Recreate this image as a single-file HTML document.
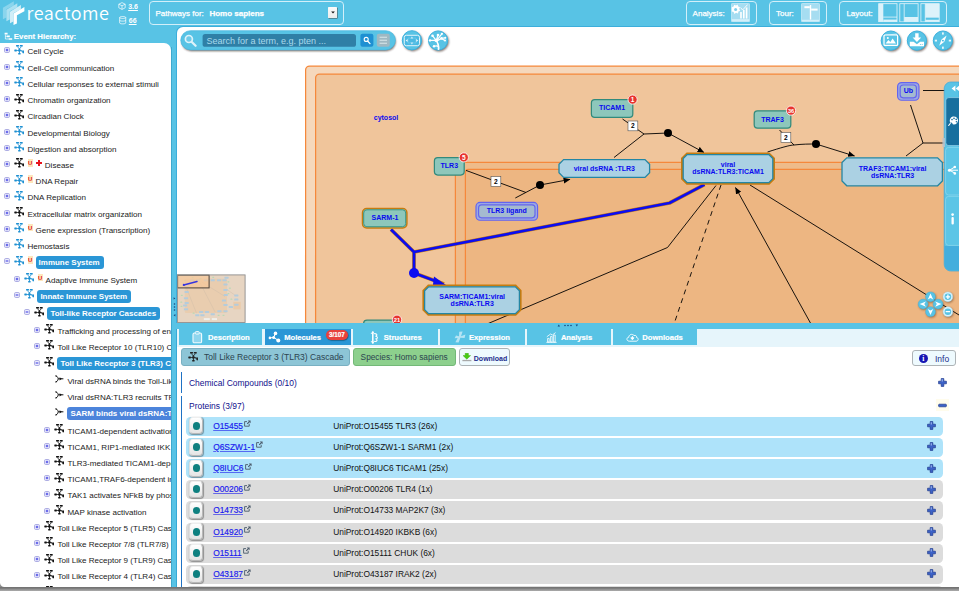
<!DOCTYPE html>
<html lang="en">
<head>
<meta charset="utf-8">
<title>Reactome Pathway Browser</title>
<style>
*{box-sizing:border-box;margin:0;padding:0}
html,body{width:959px;height:591px;overflow:hidden}
body{background:#58C3E5;font-family:"Liberation Sans",Arial,sans-serif;font-size:8px;color:#222;position:relative}
.abs{position:absolute}
svg{display:block}
/* header */
#logo{position:absolute;left:26.6px;top:0.4px;font-family:"Noto Sans CJK SC","Liberation Sans",sans-serif;font-weight:350;font-size:18px;line-height:24px;color:#fff;letter-spacing:.5px}
.ver{position:absolute;left:128.2px;color:#fff;font-weight:bold;font-size:7px;line-height:8px;text-decoration:underline}
.hbox{position:absolute;top:1px;height:24.3px;border:1.3px solid #D3EFF9;border-radius:4px;color:#fff;font-size:8px;line-height:23.8px;-webkit-text-stroke:.25px #fff}
.hbox b{font-weight:bold}
/* tree */
#ehlabel{position:absolute;left:13.8px;top:30.8px;color:#fff;font-weight:bold;font-size:7.85px;line-height:12px;-webkit-text-stroke:.15px #fff}
#tree{position:absolute;left:0;top:42.6px;width:171px;height:544.8px;background:#fff;border-top-right-radius:7px;border-bottom-left-radius:4.5px;overflow:hidden}
#treein{position:absolute;left:0;top:-42.6px;width:400px;height:640px}
.tr{position:absolute;left:0;width:400px;height:16px;line-height:16px;white-space:nowrap}
.tr .tx{position:absolute;top:.7px;color:#222;font-size:8.05px}
.tr .sel{position:absolute;top:1.3px;height:13.2px;line-height:14.4px;padding:0 4px 0 2.9px;margin-left:.1px;background:#2A96D6;color:#fff;font-weight:bold;font-size:7.97px;border-radius:3px}
.tr .sel.s2{background:#4C84DB}
.ex{position:absolute;top:3.5px}
.pi{position:absolute;top:1px}
.u{position:absolute;top:1.6px;width:5px;height:7.6px;line-height:8.6px;margin-left:.2px;background:#FDE6BC;color:#DC0808;font-weight:bold;font-size:5.8px;text-align:center}
.dz{position:absolute;top:2.6px;width:6px;height:6px}
.dz:before{content:"";position:absolute;left:2px;top:0;width:2px;height:6px;background:#E8141C}
.dz:after{content:"";position:absolute;left:0;top:2px;width:6px;height:2px;background:#E8141C}
/* diagram */
#diagb{position:absolute;left:176.2px;top:26.4px;width:790px;height:297px;background:#3CAEDB;border-top-left-radius:6.6px}
#diag{position:absolute;left:177px;top:27.3px;width:782px;height:295.3px;background:#fff;border-top-left-radius:6px;overflow:hidden}
#diag>svg{position:absolute;left:-177px;top:-27.3px}
/* bottom */
#tabs{position:absolute;left:177px;top:328.9px;width:782px;height:18.3px;background:#E6F5FB}
.tab{position:absolute;top:0;height:16.2px;background:#58C3E5;color:#fff;font-weight:bold;font-size:7.6px;line-height:18.4px;white-space:nowrap;-webkit-text-stroke:.2px #fff}
.tab.on{background:#2A96D6}
.tab span{position:absolute;top:0}
#bot{position:absolute;left:177px;top:347.2px;width:782px;height:240.2px;background:#fff;overflow:hidden}
#botin{position:absolute;left:-177px;top:-347.2px;width:959px;height:600px}
.btn{position:absolute;top:348px;height:18px;border-radius:3px;font-size:8.3px;line-height:17px;white-space:nowrap;color:#2C4450}
.sec{position:absolute;left:181.1px;border-left:1.4px solid #1F72C4;color:#10108C;font-size:8.48px;padding-left:6.9px}
.mr{position:absolute;left:185.6px;width:757.7px;height:19.2px;background:#DCDCDC;border-radius:4.5px;font-size:8.4px;line-height:18.9px;white-space:nowrap}
.mr.on{background:#AEE3FA}
.mb{position:absolute;left:3.4px;top:.9px;width:14.4px;height:17px;border-radius:4px;background:linear-gradient(#fff,#E4E4E4);border:.8px solid #B8B8B8;border-top-color:#eee;border-left-color:#ddd;box-shadow:.5px .8px 1px rgba(0,0,0,.35)}
.mb i{position:absolute;left:2.7px;top:3.5px;width:7.8px;height:7.8px;border-radius:50%;background:#0E8080}
.ml{position:absolute;left:27.6px;top:0;color:#1818EE;text-decoration:underline;text-decoration-thickness:.7px;text-decoration-color:rgba(24,24,238,.6);-webkit-text-stroke:.15px #1818EE}
.ml svg{display:inline-block;margin-left:1.2px;vertical-align:1.3px}
.md{position:absolute;left:147.6px;top:0;color:#111}
.plus{position:absolute;left:741.3px;top:4.7px}
#shadow{position:absolute;left:0;top:581px;width:959px;height:10px;background:linear-gradient(#a9a9a9,#8a8a8a 62%,#6c6c6c 66%,#949494 85%,#ababab)}
</style>
</head>
<body>
<svg width="0" height="0" style="position:absolute">
<defs>
<g id="pw" stroke="none"><rect x="2" y=".1" width="3.1" height="1.5" rx=".4"/><rect x="5.8" y=".1" width="3" height="1.5" rx=".4"/><path d="M2.9 1.4L5.4 4.6L7.9 1.4L7.1 1.4L5.4 3.5L3.7 1.4Z"/><rect x="4.95" y="3.4" width=".9" height="5.4"/><rect x=".3" y="4.5" width="2.6" height="1.9" rx=".6"/><rect x="2.6" y="5.1" width="5" height=".8"/><rect x="4.2" y="4.3" width="2.4" height="2.2" rx=".5"/><ellipse cx="9.2" cy="6.8" rx=".9" ry="1.6"/><path d="M6.4 5.4L8.6 7.6L8.6 5.6Z"/><rect x="4.1" y="8.1" width="2.6" height="1.4" rx=".4"/></g>
<g id="rx" fill="none" stroke-width="1"><path d="M.9 .9C2.8 1.2 3.2 3.8 3.2 3.8C3.2 3.8 2.8 6.6 .9 6.9"/><circle cx=".9" cy=".9" r=".6" fill="#111" stroke="none"/><circle cx=".9" cy="6.9" r=".6" fill="#111" stroke="none"/><path d="M3.2 3.8H8.4"/><path d="M4.6 2.2L6.9 3.8L4.6 5.4Z" fill="#111" stroke="none"/></g>
<g id="exp"><rect x=".5" y=".5" width="5" height="5" rx="1.3" fill="#ECECFC" stroke="#A6A6E0" stroke-width=".9"/><path d="M1.7 3H4.3M3 1.7V4.3" stroke="#4848E4" stroke-width="1.1"/></g>
<g id="exm"><rect x=".5" y=".5" width="5" height="5" rx="1.3" fill="#ECECFC" stroke="#A6A6E0" stroke-width=".9"/><path d="M1.6 3H4.4" stroke="#4848E4" stroke-width="1.1"/></g>
<g id="ext"><path d="M5.2 3.8V6.2H.6V1.6H3" fill="none" stroke="#4A5A6A" stroke-width=".9"/><path d="M3.8 .4H6.6V3.2L5.6 2.2L3.6 4.2L2.8 3.4L4.8 1.4Z" fill="#4A5A6A"/></g>
<g id="plus"><path d="M3.2 .6H5.8V3.2H8.4V5.8H5.8V8.4H3.2V5.8H.6V3.2H3.2Z" fill="#3C62C8" stroke="#1E3A8C" stroke-width=".7" stroke-linejoin="round"/><path d="M3.6 1.2H5V3.6H3.6Z" fill="#9FB6F0" opacity=".8"/></g>
<g id="minus"><rect x=".6" y="3.2" width="7.8" height="2.6" rx=".8" fill="#3C62C8" stroke="#1E3A8C" stroke-width=".7"/></g>
</defs>
</svg>

<!-- header -->
<svg class="abs" style="left:0;top:0" width="28" height="27" viewBox="0 0 28 27"><path d="M2.9 7.7L13.8 1.2L13.8 5.3L6.3 9.3L6.3 17.5L2.9 19.2Z" fill="#fff" opacity="0.3"/><path d="M6.4 9.7L17.3 3.2L17.3 7.3L9.8 11.3L9.8 19.5L6.4 21.2Z" fill="#fff" opacity="0.5"/><path d="M10.0 11.7L20.9 5.1L20.9 9.2L13.4 13.2L13.4 21.4L10.0 23.2Z" fill="#fff" opacity="0.72"/><path d="M13.5 13.6L24.4 7.1L24.4 11.2L16.9 15.2L16.9 23.4L13.5 25.1Z" fill="#fff" opacity="1"/></svg>
<div id="logo">reactome</div>
<svg class="abs" style="left:117.8px;top:2.2px" width="8" height="8" viewBox="0 0 8 8"><path d="M4 .6L7.2 2.2V5.8L4 7.4L.8 5.8V2.2ZM.8 2.2L4 3.8L7.2 2.2M4 3.8V7.4" fill="none" stroke="#fff" stroke-width=".7"/></svg>
<div class="ver" style="top:2.6px">3.6</div>
<svg class="abs" style="left:119.4px;top:16.2px" width="7.4" height="8.4" viewBox="0 0 7 8"><path d="M.6 1.4C.6 .2 6.4 .2 6.4 1.4V6.6C6.4 7.8 .6 7.8 .6 6.6ZM.6 1.4C.6 2.6 6.4 2.6 6.4 1.4M.6 4C.6 5.2 6.4 5.2 6.4 4" fill="none" stroke="#fff" stroke-width=".7"/></svg>
<div class="ver" style="top:17px;left:128.8px">66</div>

<div class="hbox" style="left:149.2px;width:194.6px"><span class="abs" style="left:5.2px">Pathways for:</span><b class="abs" style="left:59.2px">Homo sapiens</b>
<span class="abs" style="left:177.8px;top:4.7px;width:9.3px;height:11.8px;background:linear-gradient(#fafafa,#ececec);border-radius:.6px;box-shadow:.5px .6px .6px rgba(70,30,10,.7)"></span>
<svg class="abs" style="left:180.4px;top:9.2px" width="4" height="3" viewBox="0 0 4 3"><path d="M.2 .4H3.8L2 2.6Z" fill="#111"/></svg></div>

<div class="hbox" style="left:685.6px;width:71.4px"><span class="abs" style="left:6px">Analysis:</span>
<svg class="abs" style="left:44px;top:.7px" width="19" height="19.2" viewBox="0 0 19 19.2"><rect x=".4" y=".4" width="18.2" height="18.4" rx="1" fill="#A6DDF1" stroke="#D4EFF9" stroke-width=".7"/><path d="M.8 4.2L2.6 3.6L3.2 1.8L5 2.6L6.6 1.6L7.2 3.6L9 4.2L8.2 6L9.2 7.8L7.4 8.6L7 10.6L5 9.8L3.4 11L2.6 9L.8 8.6Z" fill="#fff"/><circle cx="4.6" cy="6.4" r="1.5" fill="#7FCEEB"/><path d="M9.2 15.4V9H10.8V15.4ZM12 15.4V7H13.6V15.4ZM14.8 15.4V4.6H16.4V15.4Z" fill="#fff"/><path d="M9.6 4.6L11.6 7L16.6 1.6" fill="none" stroke="#fff" stroke-width=".9"/><rect x=".8" y="16.2" width="17.4" height="2.2" fill="#D4EFF9"/></svg></div>
<div class="hbox" style="left:768.6px;width:58.2px"><span class="abs" style="left:6.4px">Tour:</span>
<svg class="abs" style="left:31.2px;top:.7px" width="19" height="19.2" viewBox="0 0 19 19.2"><rect x=".4" y=".4" width="18.2" height="18.4" rx="1" fill="#A6DDF1" stroke="#D4EFF9" stroke-width=".7"/><path d="M8.8 2H10.2V16.6H8.8Z" fill="#fff"/><path d="M3.4 3.2H8.8V5.2H3.4Z" fill="#fff"/><path d="M10.2 5.6H16.6V7.6H10.2Z" fill="#fff"/><rect x=".8" y="16.8" width="17.4" height="1.6" fill="#D4EFF9"/></svg></div>
<div class="hbox" style="left:839.4px;width:107.2px"><span class="abs" style="left:6px">Layout:</span>
<svg class="abs" style="left:38px;top:.8px" width="64" height="19.6" viewBox="0 0 64 19.6">
<g fill="none" stroke="#E4F5FB" stroke-width=".8"><rect x=".7" y=".7" width="18.3" height="18.2"/><rect x="21.8" y=".7" width="18.3" height="18.2"/><rect x="42.9" y=".7" width="18.3" height="18.2"/><path d="M26.2 .7V18.9M47.3 .7V18.9M5.2 14.1H19M47.3 14.1H61.2"/></g>
<g fill="#DCF2FA"><rect x=".7" y=".7" width="4.6" height="18.2"/><rect x="5.3" y="16.6" width="13.7" height="2.3"/><rect x="26.2" y="14" width="13.9" height="4.9"/><rect x="47.3" y=".7" width="13.9" height="13.6"/><rect x="47.3" y="16.8" width="13.9" height="2.1"/></g>
</svg></div>

<div id="shadow"></div>
<!-- tree -->
<svg class="abs" style="left:4px;top:32px" width="9" height="9" viewBox="0 0 9 9"><path d="M.6 .8H3.6V2.6H.6ZM2.6 3.6H5.8V5.2H2.6ZM4.6 6.2H8.2V7.8H4.6Z" fill="#fff"/><path d="M1.4 2.6V7H4.6M1.4 4.4H2.6" fill="none" stroke="#fff" stroke-width=".7"/></svg>
<div id="ehlabel">Event Hierarchy:</div>
<div id="tree"><div id="treein">
<div class="tr" style="top:43.6px"><svg class="ex" style="left:4.2px" width="6" height="6" viewBox="0 0 6 6"><use href="#exp"/></svg><svg class="pi" style="left:14.2px" width="10" height="10" viewBox="0 0 10 10"><use href="#pw" fill="#1E90D2" stroke="#1E90D2"/></svg><span class="tx" style="left:27.4px">Cell Cycle</span></div>
<div class="tr" style="top:60.0px"><svg class="ex" style="left:4.2px" width="6" height="6" viewBox="0 0 6 6"><use href="#exp"/></svg><svg class="pi" style="left:14.2px" width="10" height="10" viewBox="0 0 10 10"><use href="#pw" fill="#1E90D2" stroke="#1E90D2"/></svg><span class="tx" style="left:27.4px">Cell-Cell communication</span></div>
<div class="tr" style="top:76.2px"><svg class="ex" style="left:4.2px" width="6" height="6" viewBox="0 0 6 6"><use href="#exp"/></svg><svg class="pi" style="left:14.2px" width="10" height="10" viewBox="0 0 10 10"><use href="#pw" fill="#1E90D2" stroke="#1E90D2"/></svg><span class="tx" style="left:27.4px">Cellular responses to external stimuli</span></div>
<div class="tr" style="top:92.5px"><svg class="ex" style="left:4.2px" width="6" height="6" viewBox="0 0 6 6"><use href="#exp"/></svg><svg class="pi" style="left:14.2px" width="10" height="10" viewBox="0 0 10 10"><use href="#pw" fill="#111" stroke="#111"/></svg><span class="tx" style="left:27.4px">Chromatin organization</span></div>
<div class="tr" style="top:108.7px"><svg class="ex" style="left:4.2px" width="6" height="6" viewBox="0 0 6 6"><use href="#exp"/></svg><svg class="pi" style="left:14.2px" width="10" height="10" viewBox="0 0 10 10"><use href="#pw" fill="#111" stroke="#111"/></svg><span class="tx" style="left:27.4px">Circadian Clock</span></div>
<div class="tr" style="top:125.0px"><svg class="ex" style="left:4.2px" width="6" height="6" viewBox="0 0 6 6"><use href="#exp"/></svg><svg class="pi" style="left:14.2px" width="10" height="10" viewBox="0 0 10 10"><use href="#pw" fill="#1E90D2" stroke="#1E90D2"/></svg><span class="tx" style="left:27.4px">Developmental Biology</span></div>
<div class="tr" style="top:141.1px"><svg class="ex" style="left:4.2px" width="6" height="6" viewBox="0 0 6 6"><use href="#exp"/></svg><svg class="pi" style="left:14.2px" width="10" height="10" viewBox="0 0 10 10"><use href="#pw" fill="#1E90D2" stroke="#1E90D2"/></svg><span class="tx" style="left:27.4px">Digestion and absorption</span></div>
<div class="tr" style="top:157.4px"><svg class="ex" style="left:4.2px" width="6" height="6" viewBox="0 0 6 6"><use href="#exp"/></svg><svg class="pi" style="left:14.2px" width="10" height="10" viewBox="0 0 10 10"><use href="#pw" fill="#111" stroke="#111"/></svg><span class="u" style="left:27.4px">U</span><span class="dz" style="left:35.6px"></span><span class="tx" style="left:44.8px">Disease</span></div>
<div class="tr" style="top:173.6px"><svg class="ex" style="left:4.2px" width="6" height="6" viewBox="0 0 6 6"><use href="#exp"/></svg><svg class="pi" style="left:14.2px" width="10" height="10" viewBox="0 0 10 10"><use href="#pw" fill="#1E90D2" stroke="#1E90D2"/></svg><span class="u" style="left:27.4px">U</span><span class="tx" style="left:35.6px">DNA Repair</span></div>
<div class="tr" style="top:189.8px"><svg class="ex" style="left:4.2px" width="6" height="6" viewBox="0 0 6 6"><use href="#exp"/></svg><svg class="pi" style="left:14.2px" width="10" height="10" viewBox="0 0 10 10"><use href="#pw" fill="#1E90D2" stroke="#1E90D2"/></svg><span class="tx" style="left:27.4px">DNA Replication</span></div>
<div class="tr" style="top:206.0px"><svg class="ex" style="left:4.2px" width="6" height="6" viewBox="0 0 6 6"><use href="#exp"/></svg><svg class="pi" style="left:14.2px" width="10" height="10" viewBox="0 0 10 10"><use href="#pw" fill="#111" stroke="#111"/></svg><span class="tx" style="left:27.4px">Extracellular matrix organization</span></div>
<div class="tr" style="top:222.2px"><svg class="ex" style="left:4.2px" width="6" height="6" viewBox="0 0 6 6"><use href="#exp"/></svg><svg class="pi" style="left:14.2px" width="10" height="10" viewBox="0 0 10 10"><use href="#pw" fill="#1E90D2" stroke="#1E90D2"/></svg><span class="u" style="left:27.4px">U</span><span class="tx" style="left:35.6px">Gene expression (Transcription)</span></div>
<div class="tr" style="top:238.4px"><svg class="ex" style="left:4.2px" width="6" height="6" viewBox="0 0 6 6"><use href="#exp"/></svg><svg class="pi" style="left:14.2px" width="10" height="10" viewBox="0 0 10 10"><use href="#pw" fill="#1E90D2" stroke="#1E90D2"/></svg><span class="tx" style="left:27.4px">Hemostasis</span></div>
<div class="tr" style="top:254.8px"><svg class="ex" style="left:4.2px" width="6" height="6" viewBox="0 0 6 6"><use href="#exm"/></svg><svg class="pi" style="left:14.2px" width="10" height="10" viewBox="0 0 10 10"><use href="#pw" fill="#1E90D2" stroke="#1E90D2"/></svg><span class="u" style="left:27.4px">U</span><span class="sel" style="left:35.6px">Immune System</span></div>
<div class="tr" style="top:272.0px"><svg class="ex" style="left:14.2px" width="6" height="6" viewBox="0 0 6 6"><use href="#exp"/></svg><svg class="pi" style="left:24.2px" width="10" height="10" viewBox="0 0 10 10"><use href="#pw" fill="#1E90D2" stroke="#1E90D2"/></svg><span class="u" style="left:37.4px">U</span><span class="tx" style="left:45.6px">Adaptive Immune System</span></div>
<div class="tr" style="top:288.4px"><svg class="ex" style="left:14.2px" width="6" height="6" viewBox="0 0 6 6"><use href="#exm"/></svg><svg class="pi" style="left:24.2px" width="10" height="10" viewBox="0 0 10 10"><use href="#pw" fill="#1E90D2" stroke="#1E90D2"/></svg><span class="sel" style="left:37.4px">Innate Immune System</span></div>
<div class="tr" style="top:305.7px"><svg class="ex" style="left:24.2px" width="6" height="6" viewBox="0 0 6 6"><use href="#exm"/></svg><svg class="pi" style="left:34.2px" width="10" height="10" viewBox="0 0 10 10"><use href="#pw" fill="#111" stroke="#111"/></svg><span class="sel" style="left:47.4px">Toll-like Receptor Cascades</span></div>
<div class="tr" style="top:323.0px"><svg class="ex" style="left:34.2px" width="6" height="6" viewBox="0 0 6 6"><use href="#exp"/></svg><svg class="pi" style="left:44.2px" width="10" height="10" viewBox="0 0 10 10"><use href="#pw" fill="#111" stroke="#111"/></svg><span class="tx" style="left:57.4px">Trafficking and processing of endosomal TLR</span></div>
<div class="tr" style="top:339.2px"><svg class="ex" style="left:34.2px" width="6" height="6" viewBox="0 0 6 6"><use href="#exp"/></svg><svg class="pi" style="left:44.2px" width="10" height="10" viewBox="0 0 10 10"><use href="#pw" fill="#111" stroke="#111"/></svg><span class="tx" style="left:57.4px">Toll Like Receptor 10 (TLR10) Cascade</span></div>
<div class="tr" style="top:356.0px"><svg class="ex" style="left:34.2px" width="6" height="6" viewBox="0 0 6 6"><use href="#exm"/></svg><svg class="pi" style="left:44.2px" width="10" height="10" viewBox="0 0 10 10"><use href="#pw" fill="#111" stroke="#111"/></svg><span class="sel" style="left:57.4px">Toll Like Receptor 3 (TLR3) Cascade</span></div>
<div class="tr" style="top:373.0px"><svg class="pi" style="left:54.5px;top:2.1px" width="9" height="8" viewBox="0 0 9 8"><use href="#rx" stroke="#111"/></svg><span class="tx" style="left:67.4px">Viral dsRNA binds the Toll-Like Receptor 3</span></div>
<div class="tr" style="top:389.2px"><svg class="pi" style="left:54.5px;top:2.1px" width="9" height="8" viewBox="0 0 9 8"><use href="#rx" stroke="#111"/></svg><span class="tx" style="left:67.4px">Viral dsRNA:TLR3 recruits TRIF (TICAM1)</span></div>
<div class="tr" style="top:405.8px"><svg class="pi" style="left:54.5px;top:2.1px" width="9" height="8" viewBox="0 0 9 8"><use href="#rx" stroke="#111"/></svg><span class="sel s2" style="left:67.4px">SARM binds viral dsRNA:TLR3:TICAM1</span></div>
<div class="tr" style="top:423.0px"><svg class="ex" style="left:44.2px" width="6" height="6" viewBox="0 0 6 6"><use href="#exp"/></svg><svg class="pi" style="left:54.2px" width="10" height="10" viewBox="0 0 10 10"><use href="#pw" fill="#111" stroke="#111"/></svg><span class="tx" style="left:67.4px">TICAM1-dependent activation of IRF3/IRF7</span></div>
<div class="tr" style="top:439.2px"><svg class="ex" style="left:44.2px" width="6" height="6" viewBox="0 0 6 6"><use href="#exp"/></svg><svg class="pi" style="left:54.2px" width="10" height="10" viewBox="0 0 10 10"><use href="#pw" fill="#111" stroke="#111"/></svg><span class="tx" style="left:67.4px">TICAM1, RIP1-mediated IKK complex recruitment</span></div>
<div class="tr" style="top:455.3px"><svg class="ex" style="left:44.2px" width="6" height="6" viewBox="0 0 6 6"><use href="#exp"/></svg><svg class="pi" style="left:54.2px" width="10" height="10" viewBox="0 0 10 10"><use href="#pw" fill="#111" stroke="#111"/></svg><span class="tx" style="left:67.4px">TLR3-mediated TICAM1-dependent programmed cell death</span></div>
<div class="tr" style="top:471.5px"><svg class="ex" style="left:44.2px" width="6" height="6" viewBox="0 0 6 6"><use href="#exp"/></svg><svg class="pi" style="left:54.2px" width="10" height="10" viewBox="0 0 10 10"><use href="#pw" fill="#111" stroke="#111"/></svg><span class="tx" style="left:67.4px">TICAM1,TRAF6-dependent induction of TAK1 complex</span></div>
<div class="tr" style="top:487.8px"><svg class="ex" style="left:44.2px" width="6" height="6" viewBox="0 0 6 6"><use href="#exp"/></svg><svg class="pi" style="left:54.2px" width="10" height="10" viewBox="0 0 10 10"><use href="#pw" fill="#111" stroke="#111"/></svg><span class="tx" style="left:67.4px">TAK1 activates NFkB by phosphorylation</span></div>
<div class="tr" style="top:504.0px"><svg class="ex" style="left:44.2px" width="6" height="6" viewBox="0 0 6 6"><use href="#exp"/></svg><svg class="pi" style="left:54.2px" width="10" height="10" viewBox="0 0 10 10"><use href="#pw" fill="#111" stroke="#111"/></svg><span class="tx" style="left:67.4px">MAP kinase activation</span></div>
<div class="tr" style="top:520.0px"><svg class="ex" style="left:34.2px" width="6" height="6" viewBox="0 0 6 6"><use href="#exp"/></svg><svg class="pi" style="left:44.2px" width="10" height="10" viewBox="0 0 10 10"><use href="#pw" fill="#111" stroke="#111"/></svg><span class="tx" style="left:57.4px">Toll Like Receptor 5 (TLR5) Cascade</span></div>
<div class="tr" style="top:536.4px"><svg class="ex" style="left:34.2px" width="6" height="6" viewBox="0 0 6 6"><use href="#exp"/></svg><svg class="pi" style="left:44.2px" width="10" height="10" viewBox="0 0 10 10"><use href="#pw" fill="#111" stroke="#111"/></svg><span class="tx" style="left:57.4px">Toll Like Receptor 7/8 (TLR7/8) Cascade</span></div>
<div class="tr" style="top:552.6px"><svg class="ex" style="left:34.2px" width="6" height="6" viewBox="0 0 6 6"><use href="#exp"/></svg><svg class="pi" style="left:44.2px" width="10" height="10" viewBox="0 0 10 10"><use href="#pw" fill="#111" stroke="#111"/></svg><span class="tx" style="left:57.4px">Toll Like Receptor 9 (TLR9) Cascade</span></div>
<div class="tr" style="top:568.8px"><svg class="ex" style="left:34.2px" width="6" height="6" viewBox="0 0 6 6"><use href="#exp"/></svg><svg class="pi" style="left:44.2px" width="10" height="10" viewBox="0 0 10 10"><use href="#pw" fill="#111" stroke="#111"/></svg><span class="tx" style="left:57.4px">Toll Like Receptor 4 (TLR4) Cascade</span></div>
<div class="tr" style="top:585.0px"><svg class="ex" style="left:34.2px" width="6" height="6" viewBox="0 0 6 6"><use href="#exp"/></svg><svg class="pi" style="left:44.2px" width="10" height="10" viewBox="0 0 10 10"><use href="#pw" fill="#111" stroke="#111"/></svg><span class="tx" style="left:57.4px">Toll Like Receptor 2 (TLR2) Cascade</span></div>
</div></div>
<div class="abs" style="left:171px;top:47px;width:6px;height:540.4px;background:#58C3E5"></div>
<div class="abs" style="left:171px;top:47px;width:.9px;height:540.4px;background:#3FA9CF"></div>
<div class="abs" style="left:176px;top:329px;width:1.4px;height:258.4px;background:#37A9D6"></div>
<svg class="abs" style="left:172.6px;top:296px" width="3" height="24" viewBox="0 0 3 24"><g fill="#15467E"><path d="M.6 1.2L2.4 2.4L.6 3.6Z"/><circle cx="1.5" cy="8" r=".8"/><circle cx="1.5" cy="11" r=".8"/><circle cx="1.5" cy="14" r=".8"/><path d="M2.4 18L.6 19.2L2.4 20.4Z"/></g></svg>

<!-- diagram -->
<div id="diagb"></div>
<div id="diag">
<svg width="959" height="591" viewBox="0 0 959 591" font-family="Liberation Sans, Arial, sans-serif" font-weight="bold" font-size="7px" text-anchor="middle">
<defs>
<marker id="ah" markerWidth="10" markerHeight="10" refX="6.4" refY="3" orient="auto" markerUnits="userSpaceOnUse"><path d="M0 0.1L6.8 3L0 5.9Z" fill="#000"/></marker>
</defs>
<!-- compartments -->
<g fill="rgb(235,178,121)" fill-opacity=".5" stroke="#F5883B" stroke-width="1.25">
<rect x="305.6" y="66" width="800" height="500" rx="4"/>
<rect x="315.6" y="74" width="800" height="500" rx="4"/>
<rect x="455.4" y="162.4" width="800" height="500" rx="3"/>
<rect x="465.4" y="169.4" width="800" height="500" rx="3"/>
</g>
<text x="386" y="119.6" fill="#0A0AF0">cytosol</text>

<!-- black edges -->
<g fill="none" stroke="#000" stroke-width=".9">
<path d="M466 170.4L526 192.5"/>
<path d="M515.3 198L540 185"/>
<path d="M540 185L570 179.4" marker-end="url(#ah)"/>
<path d="M622.5 119L644 134"/>
<path d="M614 157.5L644 134L668 133"/>
<path d="M668 133L704 152.5" marker-end="url(#ah)"/>
<path d="M779.5 130L794 145"/>
<path d="M767.5 152C780 148 790 145 794 145C802 144 810 144 816 144"/>
<path d="M816 144L854.5 156" marker-end="url(#ah)"/>
<path d="M923 90.5H946"/>
<path d="M910.5 105L923 143"/>
<path d="M906 156L923 143H946"/>
<path d="M716 185.5L667.5 247.5L480 327"/>
<path d="M721 185L672 330" stroke-dasharray="5 4.2"/>
<path d="M811 324L735.5 187.5" marker-end="url(#ah)"/>
<path d="M750 185L959 315"/>
</g>
<g fill="#000"><circle cx="540" cy="185" r="4"/><circle cx="668" cy="133" r="4"/><circle cx="816" cy="144" r="4"/></g>

<!-- blue selected edge -->
<g fill="none" stroke-linejoin="round">
<path d="M391 229.5L414 252V273L444 284M414 252L669.5 203L704.5 184.6" stroke="#C67C10" stroke-width="3.7"/>
<path d="M391 229.5L414 252V273L438 282M414 252L669.5 203L704.5 184.6" stroke="#0C0CF0" stroke-width="2.7"/>
</g>
<circle cx="414" cy="273" r="5" fill="#0C0CF0"/>
<path d="M434 276.4L446 285L432.6 287.4Z" fill="#0C0CF0"/>

<!-- stoichiometry -->
<g fill="#fff" stroke="#555" stroke-width=".6"><rect x="491" y="176.6" width="9.8" height="9.8"/><rect x="628" y="121" width="9.8" height="9.8"/><rect x="781" y="132.6" width="9.8" height="9.8"/></g>
<g fill="#000" font-size="6.6px"><text x="495.9" y="184">2</text><text x="632.9" y="128.4">2</text><text x="785.9" y="140">2</text></g>

<!-- proteins -->
<g fill="#8DC7BB" stroke="#328A7C" stroke-width="1.25">
<rect x="434.4" y="157.6" width="29.8" height="17.4" rx="3.4"/>
<rect x="591.4" y="99.6" width="41.4" height="17.8" rx="3.4"/>
<rect x="754.2" y="110.8" width="36.6" height="17.4" rx="3.4"/>
<rect x="363.6" y="320.2" width="33.4" height="18" rx="3.4"/>
</g>
<rect x="362.5" y="208.6" width="44.4" height="19.3" rx="4.2" fill="#8DC7BB" stroke="#C67C10" stroke-width="1.5"/>
<rect x="363.7" y="209.8" width="42" height="16.9" rx="3.2" fill="none" stroke="#3E9686" stroke-width="1"/>

<!-- complexes -->
<g fill="#ABD1E3" stroke="#2486A4" stroke-width="1.3">
<path d="M563.6 159.6H645L649.6 164.2V172.8L645 177.4H563.6L559 172.8V164.2Z"/>
<path d="M846.8 157.8H937.6L942.4 162.6V181L937.6 185.8H846.8L842 181V162.6Z"/>
</g>
<path d="M687 153.4H769L774 158.4V178.8L769 183.8H687L682 178.8V158.4Z" fill="#ABD1E3" stroke="#C67C10" stroke-width="2"/>
<path d="M687.2 154.6H768.8L772.8 158.6V178.6L768.8 182.6H687.2L683.2 178.6V158.6Z" fill="none" stroke="#2486A4" stroke-width="1.3"/>
<path d="M428.4 285.6H515.6L520.6 290.6V309.8L515.6 314.8H428.4L423.4 309.8V290.6Z" fill="#ABD1E3" stroke="#C67C10" stroke-width="2"/>
<path d="M428.6 286.8H515.4L519.4 290.8V309.6L515.4 313.6H428.6L424.6 309.6V290.8Z" fill="none" stroke="#2486A4" stroke-width="1.3"/>

<!-- sets -->
<g fill="#A4BAD0" stroke="#6464EE" stroke-width="1.15">
<rect x="476" y="202.4" width="61.6" height="17.8" rx="4" fill="#9BA8E2"/>
<rect x="478.6" y="204.8" width="56.4" height="13" rx="3"/>
<rect x="897.6" y="82.6" width="21.4" height="17.6" rx="4" fill="#9BA8E2"/>
<rect x="900.2" y="85" width="16.2" height="12.8" rx="3"/>
</g>

<!-- labels -->
<g fill="#0A0AF0">
<text x="449.3" y="167.8">TLR3</text>
<text x="612" y="110.3">TICAM1</text>
<text x="772.5" y="121.5">TRAF3</text>
<text x="385" y="220.3">SARM-1</text>
<text x="506.8" y="212.8">TLR3 ligand</text>
<text x="908.3" y="93">Ub</text>
<text x="604.3" y="171">viral dsRNA :TLR3</text>
<text x="728" y="167.3">viral</text><text x="728" y="174.2">dsRNA:TLR3:TICAM1</text>
<text x="892.6" y="170.9">TRAF3:TICAM1:viral</text><text x="892.6" y="177.9">dsRNA:TLR3</text>
<text x="472.2" y="298.8">SARM:TICAM1:viral</text><text x="472.2" y="305.7">dsRNA:TLR3</text>
</g>

<!-- badges -->
<g fill="#E8342E" stroke="#fff" stroke-width=".8"><circle cx="463.8" cy="157.4" r="4.6"/><circle cx="632.6" cy="99.6" r="4.6"/><circle cx="791" cy="110.6" r="4.6"/><circle cx="397" cy="319.8" r="4.7"/></g>
<g fill="#fff" font-size="6.6px"><text x="463.8" y="159.8">5</text><text x="632.6" y="102">1</text><text x="791" y="112.8" font-size="5.6px">36</text><text x="397" y="322" font-size="5.8px">21</text></g>

<!-- minimap -->
<rect x="177.4" y="274.9" width="67.7" height="47.6" fill="#E7D5C2"/>
<rect x="184.8" y="278.8" width="42.2" height="34.3" rx="1.5" fill="#E9CBAC" opacity=".85"/>
<rect x="233.3" y="301.9" width="7.4" height="7.4" fill="#EBC9A6" opacity=".9"/>
<g stroke="#CDBBA6" stroke-width=".4" fill="none"><path d="M199.5 281.8L215.2 312.2M186.7 288.6L196.5 313.2M201.4 281.8L225.0 296.5M227.0 289.6L234.8 295.0"/></g>
<g fill="#B4CCDC"><rect x="195.9" y="279.3" width="4.2" height="2" rx=".4"/><rect x="203.8" y="279.3" width="4.2" height="2" rx=".4"/><rect x="210.6" y="279.3" width="4.2" height="2" rx=".4"/><rect x="217.0" y="279.3" width="4.2" height="2" rx=".4"/><rect x="222.4" y="279.3" width="4.2" height="2" rx=".4"/><rect x="224.4" y="276.7" width="4.2" height="2" rx=".4"/><rect x="223.4" y="283.5" width="4.2" height="2" rx=".4"/><rect x="223.4" y="289.1" width="4.2" height="2" rx=".4"/><rect x="223.7" y="294.0" width="4.2" height="2" rx=".4"/><rect x="221.9" y="299.6" width="4.2" height="2" rx=".4"/><rect x="223.4" y="304.0" width="4.2" height="2" rx=".4"/><rect x="228.8" y="306.1" width="4.2" height="2" rx=".4"/><rect x="223.4" y="310.2" width="4.2" height="2" rx=".4"/><rect x="217.3" y="310.2" width="4.2" height="2" rx=".4"/><rect x="210.6" y="313.2" width="4.2" height="2" rx=".4"/><rect x="204.9" y="311.0" width="4.2" height="2" rx=".4"/><rect x="199.0" y="311.0" width="4.2" height="2" rx=".4"/><rect x="195.2" y="314.3" width="4.2" height="2" rx=".4"/><rect x="200.3" y="314.3" width="4.2" height="2" rx=".4"/><rect x="184.6" y="291.1" width="4.2" height="2" rx=".4"/><rect x="183.9" y="297.3" width="4.2" height="2" rx=".4"/><rect x="184.6" y="301.9" width="4.2" height="2" rx=".4"/><rect x="183.0" y="304.5" width="4.2" height="2" rx=".4"/><rect x="183.9" y="308.3" width="4.2" height="2" rx=".4"/><rect x="184.6" y="285.9" width="4.2" height="2" rx=".4"/><rect x="190.0" y="279.3" width="4.2" height="2" rx=".4"/><rect x="234.2" y="294.5" width="4.2" height="2" rx=".4"/><rect x="234.2" y="298.6" width="4.2" height="2" rx=".4"/><rect x="234.2" y="303.8" width="4.2" height="2" rx=".4"/></g>
<g fill="#B9D9B4"><rect x="191.6" y="277.1" width="2" height="1.2" rx=".4"/><rect x="199.5" y="278.0" width="2" height="1.2" rx=".4"/><rect x="184.2" y="279.7" width="2" height="1.2" rx=".4"/><rect x="227.4" y="281.2" width="2" height="1.2" rx=".4"/><rect x="228.9" y="287.6" width="2" height="1.2" rx=".4"/><rect x="227.4" y="293.0" width="2" height="1.2" rx=".4"/><rect x="230.4" y="298.6" width="2" height="1.2" rx=".4"/><rect x="180.8" y="294.7" width="2" height="1.2" rx=".4"/><rect x="180.3" y="301.6" width="2" height="1.2" rx=".4"/><rect x="180.5" y="305.7" width="2" height="1.2" rx=".4"/><rect x="192.6" y="312.6" width="2" height="1.2" rx=".4"/><rect x="217.6" y="314.7" width="2" height="1.2" rx=".4"/><rect x="222.5" y="314.7" width="2" height="1.2" rx=".4"/><rect x="212.2" y="276.8" width="2" height="1.2" rx=".4"/></g>
<g fill="#EFEFEA"><rect x="203.8" y="318.1" width="6" height="2"/><rect x="211.8" y="318.1" width="5.2" height="2"/></g>
<rect x="177.6" y="275.1" width="31.5" height="12.8" fill="#F6C898" fill-opacity=".7" stroke="#4A4038" stroke-width="1"/>
<path d="M183.8 284.9L197.0 281.6" stroke="#3434E0" stroke-width="1.5" fill="none" stroke-linecap="round"/><circle cx="183.8" cy="284.9" r="1.1" fill="#3434E0"/>
<rect x="177.4" y="274.9" width="67.7" height="47.6" fill="none" stroke="#8E8E8E" stroke-width=".9"/>

<!-- search -->
<g>
<rect x="182" y="32.4" width="213.6" height="18.6" rx="9.3" fill="#2A1208" opacity=".7" filter="url(#bl)"/>
<rect x="180.8" y="30.7" width="214.6" height="19.2" rx="9.6" fill="#58C3E5"/>
<rect x="180.8" y="30.7" width="214.6" height="19.2" rx="9.6" fill="none" stroke="#49B8E1" stroke-width=".7"/>
<circle cx="188.9" cy="39" r="3.5" fill="#6FCBE9" stroke="#DDF2FA" stroke-width="1.7"/><path d="M191.8 42L195.6 45.8" stroke="#DDF2FA" stroke-width="2.3" stroke-linecap="round"/>
<rect x="202.6" y="34" width="153.4" height="12.8" rx="2.6" fill="#2F7FA6"/>
<text x="206.4" y="43.5" text-anchor="start" font-weight="normal" font-size="9px" fill="#A9D9EC">Search for a term, e.g. pten ...</text>
<rect x="360.4" y="33.8" width="13" height="13" rx="2" fill="#1E90D2"/>
<circle cx="366.2" cy="39.4" r="2" fill="none" stroke="#fff" stroke-width="1.1"/><path d="M367.8 41.2L370 43.6" stroke="#fff" stroke-width="1.3" stroke-linecap="round"/>
<rect x="376.8" y="33.8" width="13" height="13" rx="2" fill="#9FB8C2"/>
<path d="M379.6 37.2H387M379.6 40.2H387M379.6 43.2H387" stroke="#D9E6EA" stroke-width="1.1"/>
</g>
<filter id="bl" x="-10%" y="-30%" width="120%" height="180%"><feGaussianBlur stdDeviation="1.1"/></filter>
<!-- round buttons -->
<g id="rb">
<g fill="#2A1208" opacity=".62" filter="url(#bl)"><circle cx="412.9" cy="41.5" r="9.7"/><circle cx="439.1" cy="41.7" r="9.7"/><circle cx="891.8" cy="41.8" r="9.7"/><circle cx="917.9" cy="41.8" r="9.7"/><circle cx="943.9" cy="41.8" r="9.7"/></g>
<g fill="#58C3E5" stroke="#3DB2E0" stroke-width="1"><circle cx="411.9" cy="40.3" r="9.6"/><circle cx="438.1" cy="40.5" r="9.6"/><circle cx="890.8" cy="40.6" r="9.6"/><circle cx="916.9" cy="40.6" r="9.6"/><circle cx="942.9" cy="40.6" r="9.6"/></g>
</g>
<!-- fit icon -->
<rect x="404.3" y="35.3" width="15.2" height="10.4" rx="2" fill="#4BB9E2" stroke="#DFF3FA" stroke-width="1"/>
<g fill="#EAF7FC"><path d="M411.9 36.4L413.3 38.4H410.5ZM411.9 44.6L413.3 42.6H410.5ZM405.6 40.5L407.8 39V42ZM418.2 40.5L416 39V42Z"/></g>
<path d="M408 38H416V43H408Z" fill="none" stroke="#7FCFEC" stroke-width=".6"/>
<!-- tree/plant icon -->
<g fill="none" stroke="#fff" stroke-width="1.2" stroke-linecap="round"><path d="M438.6 49.4C438.8 45 438 42.4 436.2 40.4L432.6 35.8M436.2 40.4L438 35.2M436.6 40.6L441.8 33.9M437 41L441.4 38.4L445.2 37.8M441.4 38.4L444.8 40.6M436 40.4H430.2M438.4 47C437.4 45.6 436 45.6 434.2 46.2"/></g>
<path d="M437.2 42C439.4 44 439.6 47 439.4 49.6L437.6 49.8C438 46.6 437.8 44 436.2 42.6Z" fill="#fff"/>
<g fill="#fff"><circle cx="436.2" cy="40.4" r="1.7"/><circle cx="432.5" cy="35.7" r="1.3"/><circle cx="438" cy="35" r="1.3"/><circle cx="441.9" cy="33.8" r="1.1"/><circle cx="441.5" cy="38.4" r="1.3"/><circle cx="445.3" cy="37.8" r="1"/><circle cx="445" cy="40.6" r="1"/><circle cx="430" cy="40.4" r="1.2"/><circle cx="434" cy="46.3" r="1.2"/></g>
<!-- image icon -->
<g><path d="M884.2 35.4L896.6 34L897.6 44.4L885.2 45.8Z" fill="none" stroke="#BFE7F5" stroke-width=".9"/><rect x="884" y="35" width="13.6" height="10.4" rx="1" fill="#58C3E5" stroke="#fff" stroke-width="1.2"/><path d="M885.6 43.6L888.4 40L890.4 42L892.6 38.6L896 43.6Z" fill="#fff"/><circle cx="887.8" cy="38" r="1" fill="#fff"/></g>
<!-- download icon -->
<g fill="#fff"><path d="M915.2 33.2H918.6V37.4H921.2L916.9 42L912.6 37.4H915.2Z"/><path d="M909.8 41.8H913.6L916.9 44.2L920.2 41.8H924V46.2H909.8Z"/></g>
<circle cx="920.4" cy="44.4" r=".5" fill="#58C3E5"/><circle cx="922.2" cy="44.4" r=".5" fill="#58C3E5"/>
<!-- compass icon -->
<g fill="#E9F7FC"><rect x="942" y="32.4" width="1.8" height="2.2"/><rect x="942" y="46.6" width="1.8" height="2.2"/><rect x="934.8" y="39.7" width="2.2" height="1.8"/><rect x="948.8" y="39.7" width="2.2" height="1.8"/></g>
<path d="M946.6 35.6L944.3 41.8L941.5 39.4Z" fill="#fff"/><path d="M939.2 45.8L941.5 39.4L944.3 41.8Z" fill="#fff"/><circle cx="942.9" cy="40.6" r=".9" fill="#3DB2E0"/>

<!-- right side panel -->
<path d="M959 82H951C947 82 944.2 85 944.2 89V264C944.2 268 947 271 951 271H959Z" fill="#58C3E5" stroke="#3DA8DA" stroke-width=".7"/>
<path d="M959 246H944.6V264C944.6 268 947 270.6 951 270.6H959Z" fill="#44AEDD"/>
<rect x="945.8" y="97.6" width="20" height="48" rx="3" fill="#176F9E" stroke="#9CD5EE" stroke-width=".7"/>
<rect x="945.6" y="147.4" width="20" height="47.6" rx="3" fill="#5CC5E6" stroke="#8FD8EE" stroke-width=".7"/>
<rect x="945.6" y="196.4" width="20" height="49" rx="3" fill="#5CC5E6" stroke="#8FD8EE" stroke-width=".7"/>
<path d="M955.4 85.4L951.6 88.4L955.4 91.4ZM959.6 85.4L955.8 88.4L959.6 91.4Z" fill="#fff"/>
<g fill="#fff"><path d="M953.6 116.6C956.4 116.6 958 118.6 958 120.6C958 123 956 124.8 953.6 124.6C952.4 124.6 952.6 123.4 952 122.8C951.4 122.2 950 122.6 949.8 121.4C949.6 118.8 951.2 116.6 953.6 116.6Z"/><path d="M951.4 122.4L949.4 125.4C949 126 948 126 947.8 125.6C948.6 125.2 948.8 124.4 949.6 123.6L951 122Z"/></g>
<g fill="#176F9E"><circle cx="952" cy="119.6" r=".8"/><circle cx="954" cy="118.4" r=".8"/><circle cx="956.2" cy="119.4" r=".8"/><circle cx="956.4" cy="121.8" r=".8"/></g>
<rect x="942.4" y="138" width="2.6" height="9" fill="#B9C3CC" opacity=".85"/>
<g fill="#fff"><circle cx="949.4" cy="170.2" r="1.5"/><circle cx="954.8" cy="167" r="1.3"/><circle cx="954.8" cy="173.4" r="1.3"/><path d="M949.4 169.7L954.8 166.6V167.6L949.6 170.8ZM949.4 170.6L954.8 173.8V172.8L949.6 169.6Z"/><rect x="949" y="169.7" width="9" height="1"/></g>
<g fill="#fff"><circle cx="952.6" cy="214.6" r="1.3"/><rect x="951.5" y="217" width="2.3" height="7.4" rx="1"/></g>

<!-- nav controls -->
<g>
<g fill="#3A1A08" opacity=".5" filter="url(#bl)"><circle cx="931.2" cy="297.8" r="4.9"/><circle cx="923.8" cy="305.1" r="4.9"/><circle cx="938.7" cy="305.1" r="4.9"/><circle cx="931.2" cy="312.7" r="4.9"/><circle cx="948.6" cy="297.8" r="4.9"/><circle cx="948.6" cy="312.7" r="4.9"/></g>
<g fill="#58C3E5" stroke="#45B4DE" stroke-width=".5"><circle cx="930.5" cy="296.8" r="4.9"/><circle cx="923.1" cy="304.1" r="4.9"/><circle cx="938" cy="304.1" r="4.9"/><circle cx="930.5" cy="311.7" r="4.9"/></g>
<g fill="#DDF2FA" stroke="#A5DCF0" stroke-width=".5"><circle cx="947.9" cy="296.8" r="4.9"/><circle cx="947.9" cy="311.7" r="4.9"/></g>
<g fill="#58C3E5"><circle cx="947.9" cy="296.8" r="3.3"/><circle cx="947.9" cy="311.7" r="3.3"/></g>
<g fill="#fff"><path d="M930.5 293.4L933.2 299.6L930.5 298L927.8 299.6Z"/><path d="M930.5 315.1L933.2 308.9L930.5 310.5L927.8 308.9Z"/><path d="M919.7 304.1L925.9 301.4L924.3 304.1L925.9 306.8Z"/><path d="M941.4 304.1L935.2 301.4L936.8 304.1L935.2 306.8Z"/></g>
<g fill="none" stroke="#fff" stroke-width="1.3"><path d="M945.7 296.8H950.1M947.9 294.6V299M945.7 311.7H950.1"/></g>
</g>
</svg>

</div>

<!-- splitter dots -->
<svg class="abs" style="left:556px;top:323.6px" width="24" height="3" viewBox="0 0 24 3"><g fill="#15467E"><path d="M1.6 2.4L2.8 .6L4 2.4Z"/><circle cx="9" cy="1.5" r=".8"/><circle cx="12" cy="1.5" r=".8"/><circle cx="15" cy="1.5" r=".8"/><path d="M19.6 .6L20.8 2.4L22 .6Z"/></g></svg>

<!-- tabs -->
<div id="tabs">
<div class="tab" style="left:1.9px;width:83.5px"><svg class="abs" style="left:13.2px;top:2.4px" width="11" height="13" viewBox="0 0 11 13"><rect x="1" y="2" width="8.6" height="9.8" rx="1.4" fill="#8FD6EE" stroke="#F2FBFE" stroke-width="1.1"/><rect x="3.4" y=".5" width="3.8" height="2.6" rx=".8" fill="#8FD6EE" stroke="#F2FBFE" stroke-width=".9"/></svg><span style="left:29.1px">Description</span></div>
<div class="tab on" style="left:87.8px;width:86.7px"><svg class="abs" style="left:3px;top:2.6px" width="14" height="12" viewBox="0 0 14 12"><path d="M1.9 6.9L5.6 6.4L7.5 2.4M5.6 6.4L10.3 9.4" fill="none" stroke="#fff" stroke-width="1"/><g fill="#fff"><circle cx="1.9" cy="6.9" r="1.3"/><circle cx="5.6" cy="6.4" r="1.5"/><circle cx="7.5" cy="2.4" r="1.8"/><circle cx="10.3" cy="9.4" r="2"/></g></svg><span style="left:19.5px">Molecules</span>
<span class="abs" style="left:60.8px;top:1.6px;width:22.4px;height:9.8px;border-radius:5px;background:#E8413C;font-size:6.3px;line-height:10px;text-align:center;font-weight:bold;box-shadow:.6px .8px 1px rgba(0,0,0,.4)">3/107</span></div>
<div class="tab" style="left:176.3px;width:84.7px"><svg class="abs" style="left:16.6px;top:2px" width="10" height="13" viewBox="0 0 10 13"><path d="M2.8 .6V12.4" stroke="#fff" stroke-width="1.5"/><path d="M1 10L2.8 12.4L4.6 10M1 3L2.8 .6L4.6 3" fill="none" stroke="#fff" stroke-width=".8"/><path d="M4.4 2.6C7.4 2.4 7.6 4.8 5.4 5.2C8.4 5.6 7.8 8 5.4 7.8C8 8.4 7.4 10.8 4.4 10.4" fill="none" stroke="#fff" stroke-width="1.1"/></svg><span style="left:30.5px">Structures</span></div>
<div class="tab" style="left:262.6px;width:85.4px"><svg class="abs" style="left:14px;top:2.4px" width="12" height="12" viewBox="0 0 12 12"><path d="M5.2 .8L8.6 .4L7 5.2L11.4 3.6L10.6 7L6.4 6.8L4.6 11.4L1.4 11.2L3.6 7L.6 7.2L2 4.4L5 5.2Z" fill="#B5E4F4"/></svg><span style="left:29.4px">Expression</span></div>
<div class="tab" style="left:349.6px;width:84.8px"><svg class="abs" style="left:19.4px;top:3px" width="11" height="11" viewBox="0 0 11 11"><path d="M1.6 10V6.4H3.2V10ZM4.6 10V4.4H6.2V10ZM7.6 10V3H9.2V10Z" fill="none" stroke="#fff" stroke-width=".8"/><path d="M.8 4.8L4.6 2L6.4 3L9.6 .6" fill="none" stroke="#fff" stroke-width=".8"/><path d="M.4 10.4H10.6" stroke="#fff" stroke-width=".8"/></svg><span style="left:34.3px">Analysis</span></div>
<div class="tab" style="left:436px;width:84.3px"><svg class="abs" style="left:13.4px;top:4px" width="13" height="9" viewBox="0 0 13 9"><path d="M3.4 8.2C.2 8.2 .2 4.4 2.8 4.2C2.8 1.6 6.2 .2 8 2.6C10 1.8 11 3.6 10.4 4.4C13 4.8 12.6 8.2 10 8.2Z" fill="none" stroke="#fff" stroke-width=".9"/><path d="M6.4 3V6M4.8 4.8L6.4 6.8L8 4.8Z" fill="#fff" stroke="#fff" stroke-width=".9"/></svg><span style="left:29.3px">Downloads</span></div>
</div>

<!-- bottom panel -->
<div id="bot"><div id="botin">
<div class="btn" style="left:180.6px;width:169px;background:#8DC5D6;border:.8px solid #79B0C2"><svg class="abs" style="left:6.4px;top:3px" width="10" height="10" viewBox="0 0 10 10"><use href="#pw" fill="#222" stroke="#222"/></svg><span class="abs" style="left:22.4px;font-size:8.53px">Toll Like Receptor 3 (TLR3) Cascade</span></div>
<div class="btn" style="left:353px;width:102.6px;background:#8DD08D;border:.8px solid #74B878"><span class="abs" style="left:6.6px">Species: Homo sapiens</span></div>
<div class="btn" style="left:459px;width:50.8px;background:#EEFAFE;border:.9px solid #ADB3B6;top:348px;height:17.8px"><svg class="abs" style="left:1.8px;top:3.6px" width="10" height="9" viewBox="0 0 10 9"><path d="M3.2 .3H6.4V2.6H8.6L4.8 6.2L1 2.6H3.2Z" fill="#48CC14" stroke="#2FA00A" stroke-width=".4"/><rect x=".4" y="6.9" width="9" height="1.3" fill="#A9A9A9"/></svg><span class="abs" style="left:13.8px;top:1.2px;font-size:7px;font-weight:bold;color:#1C2C8C">Download</span></div>
<div class="btn" style="left:911.8px;width:44.2px;top:350.1px;height:16.4px;background:#EEFAFE;border:.9px solid #ADB3B6"><span class="abs" style="left:5.9px;top:2.6px;width:9.4px;height:9.4px;border-radius:50%;background:#1616B4;color:#fff;font-weight:bold;font-size:7.6px;line-height:9.6px;text-align:center;font-family:'Liberation Serif',serif">i</span><span class="abs" style="left:22.2px;top:-.2px;color:#1C2C8C;font-size:8.5px">Info</span></div>

<div class="sec" style="top:371.6px;height:21.6px;line-height:22.4px">Chemical Compounds (0/10)</div>
<svg class="abs" style="left:938px;top:377.6px" width="9" height="9" viewBox="0 0 9 9"><use href="#plus"/></svg>
<div class="sec" style="top:395.6px;height:196px;line-height:21.4px">Proteins (3/97)</div>
<div class="abs" style="left:936px;top:399px;width:13px;height:12px;background:#FFFCEC"></div>
<svg class="abs" style="left:938px;top:400.6px" width="9" height="9" viewBox="0 0 9 9"><use href="#minus"/></svg>
<div class="mr on" style="top:416.5px"><span class="mb"><i></i></span><a class="ml">O15455<svg width="7" height="7" viewBox="0 0 7 7"><use href="#ext"/></svg></a><span class="md">UniProt:O15455 TLR3 (26x)</span><svg class="plus" width="9" height="9" viewBox="0 0 9 9"><use href="#plus"/></svg></div>
<div class="mr on" style="top:437.7px"><span class="mb"><i></i></span><a class="ml">Q6SZW1-1<svg width="7" height="7" viewBox="0 0 7 7"><use href="#ext"/></svg></a><span class="md">UniProt:Q6SZW1-1 SARM1 (2x)</span><svg class="plus" width="9" height="9" viewBox="0 0 9 9"><use href="#plus"/></svg></div>
<div class="mr on" style="top:458.9px"><span class="mb"><i></i></span><a class="ml">Q8IUC6<svg width="7" height="7" viewBox="0 0 7 7"><use href="#ext"/></svg></a><span class="md">UniProt:Q8IUC6 TICAM1 (25x)</span><svg class="plus" width="9" height="9" viewBox="0 0 9 9"><use href="#plus"/></svg></div>
<div class="mr" style="top:480.1px"><span class="mb"><i></i></span><a class="ml">O00206<svg width="7" height="7" viewBox="0 0 7 7"><use href="#ext"/></svg></a><span class="md">UniProt:O00206 TLR4 (1x)</span><svg class="plus" width="9" height="9" viewBox="0 0 9 9"><use href="#plus"/></svg></div>
<div class="mr" style="top:501.3px"><span class="mb"><i></i></span><a class="ml">O14733<svg width="7" height="7" viewBox="0 0 7 7"><use href="#ext"/></svg></a><span class="md">UniProt:O14733 MAP2K7 (3x)</span><svg class="plus" width="9" height="9" viewBox="0 0 9 9"><use href="#plus"/></svg></div>
<div class="mr" style="top:522.5px"><span class="mb"><i></i></span><a class="ml">O14920<svg width="7" height="7" viewBox="0 0 7 7"><use href="#ext"/></svg></a><span class="md">UniProt:O14920 IKBKB (6x)</span><svg class="plus" width="9" height="9" viewBox="0 0 9 9"><use href="#plus"/></svg></div>
<div class="mr" style="top:543.6px"><span class="mb"><i></i></span><a class="ml">O15111<svg width="7" height="7" viewBox="0 0 7 7"><use href="#ext"/></svg></a><span class="md">UniProt:O15111 CHUK (6x)</span><svg class="plus" width="9" height="9" viewBox="0 0 9 9"><use href="#plus"/></svg></div>
<div class="mr" style="top:564.8px"><span class="mb"><i></i></span><a class="ml">O43187<svg width="7" height="7" viewBox="0 0 7 7"><use href="#ext"/></svg></a><span class="md">UniProt:O43187 IRAK2 (2x)</span><svg class="plus" width="9" height="9" viewBox="0 0 9 9"><use href="#plus"/></svg></div>
<div class="mr" style="top:586.0px"><span class="mb"><i></i></span><a class="ml">O43318<svg width="7" height="7" viewBox="0 0 7 7"><use href="#ext"/></svg></a><span class="md">UniProt:O43318 MAP3K7 (5x)</span><svg class="plus" width="9" height="9" viewBox="0 0 9 9"><use href="#plus"/></svg></div>
</div></div>
</body>
</html>
